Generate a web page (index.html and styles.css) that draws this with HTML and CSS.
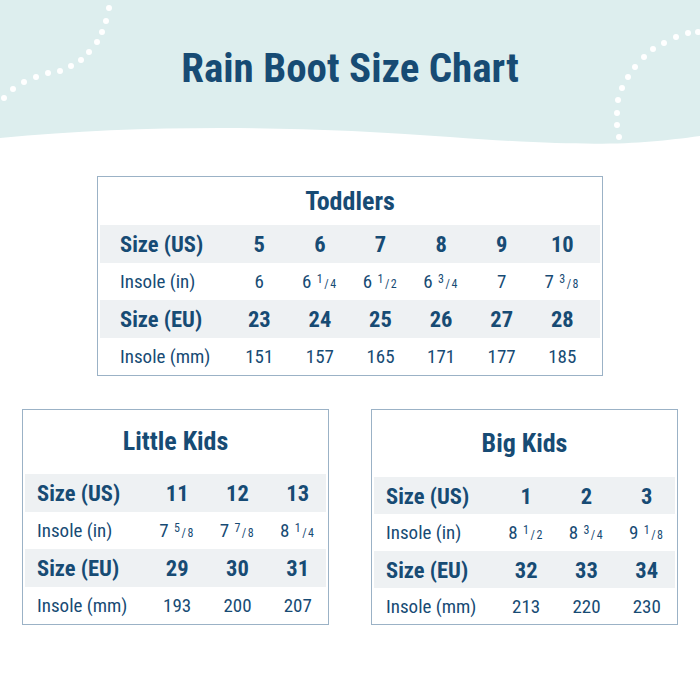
FILE: index.html
```html
<!DOCTYPE html>
<html>
<head>
<meta charset="utf-8">
<link rel="stylesheet" href="styles.css">
</head>
<body>
<header class="hero">
  <svg class="hero-bg" width="700" height="150" viewBox="0 0 700 150" aria-hidden="true">
    <path d="M0,138 C150,124 300,126 450,137 S640,144 700,136 L700,0 L0,0 Z" fill="#ddeeee"/>
    <g fill="#ffffff">
      <circle cx="109" cy="8" r="3"/><circle cx="106" cy="21" r="3"/><circle cx="102" cy="32" r="3"/>
      <circle cx="97" cy="42" r="3"/><circle cx="89" cy="52" r="3"/><circle cx="81" cy="60" r="3"/>
      <circle cx="71" cy="66" r="3"/><circle cx="60" cy="71" r="3"/><circle cx="48" cy="73" r="3"/>
      <circle cx="36" cy="77" r="3"/><circle cx="24" cy="82" r="3"/><circle cx="13" cy="89" r="3"/>
      <circle cx="4" cy="98" r="3"/>
      <circle cx="698" cy="32" r="3"/><circle cx="688" cy="33" r="3"/><circle cx="676" cy="37" r="3"/>
      <circle cx="664" cy="43" r="3"/><circle cx="653" cy="49" r="3"/><circle cx="644" cy="57" r="3"/>
      <circle cx="635" cy="67" r="3"/><circle cx="628" cy="77" r="3"/><circle cx="622" cy="88" r="3"/>
      <circle cx="618" cy="100" r="3"/><circle cx="617" cy="113" r="3"/><circle cx="617" cy="125" r="3"/>
      <circle cx="619" cy="137" r="3"/>
    </g>
  </svg>
  <h1 class="title">Rain Boot Size Chart</h1>
</header>

<main class="charts">
  <section class="card card-toddlers">
    <h2 class="card-title">Toddlers</h2>
    <div class="grid grid-6">
      <div class="row shade strong"><span class="lbl">Size (US)</span><span>5</span><span>6</span><span>7</span><span>8</span><span>9</span><span>10</span></div>
      <div class="row"><span class="lbl">Insole (in)</span><span>6</span><span>6 <span class="fr"><sup>1</sup>/<sub>4</sub></span></span><span>6 <span class="fr"><sup>1</sup>/<sub>2</sub></span></span><span>6 <span class="fr"><sup>3</sup>/<sub>4</sub></span></span><span>7</span><span>7 <span class="fr"><sup>3</sup>/<sub>8</sub></span></span></div>
      <div class="row shade strong"><span class="lbl">Size (EU)</span><span>23</span><span>24</span><span>25</span><span>26</span><span>27</span><span>28</span></div>
      <div class="row"><span class="lbl">Insole (mm)</span><span>151</span><span>157</span><span>165</span><span>171</span><span>177</span><span>185</span></div>
    </div>
  </section>

  <div class="pair">
    <section class="card card-small">
      <h2 class="card-title">Little Kids</h2>
      <div class="grid grid-3">
        <div class="row shade strong"><span class="lbl">Size (US)</span><span>11</span><span>12</span><span>13</span></div>
        <div class="row"><span class="lbl">Insole (in)</span><span>7 <span class="fr"><sup>5</sup>/<sub>8</sub></span></span><span>7 <span class="fr"><sup>7</sup>/<sub>8</sub></span></span><span>8 <span class="fr"><sup>1</sup>/<sub>4</sub></span></span></div>
        <div class="row shade strong"><span class="lbl">Size (EU)</span><span>29</span><span>30</span><span>31</span></div>
        <div class="row"><span class="lbl">Insole (mm)</span><span>193</span><span>200</span><span>207</span></div>
      </div>
    </section>
    <section class="card card-small card-big">
      <h2 class="card-title">Big Kids</h2>
      <div class="grid grid-3">
        <div class="row shade strong"><span class="lbl">Size (US)</span><span>1</span><span>2</span><span>3</span></div>
        <div class="row"><span class="lbl">Insole (in)</span><span>8 <span class="fr"><sup>1</sup>/<sub>2</sub></span></span><span>8 <span class="fr"><sup>3</sup>/<sub>4</sub></span></span><span>9 <span class="fr"><sup>1</sup>/<sub>8</sub></span></span></div>
        <div class="row shade strong"><span class="lbl">Size (EU)</span><span>32</span><span>33</span><span>34</span></div>
        <div class="row"><span class="lbl">Insole (mm)</span><span>213</span><span>220</span><span>230</span></div>
      </div>
    </section>
  </div>
</main>
</body>
</html>
```

FILE: styles.css
```css
* { box-sizing: border-box; }
html, body { margin: 0; padding: 0; }
body {
  width: 700px;
  height: 700px;
  background: #ffffff;
  font-family: "Roboto Condensed", "Roboto", "Liberation Sans Narrow", sans-serif;
  font-stretch: condensed;
  color: #174b74;
  overflow: hidden;
}

.hero {
  position: relative;
  height: 150px;
}
.hero-bg {
  position: absolute;
  left: 0;
  top: 0;
  display: block;
}
.title {
  position: relative;
  margin: 0;
  padding-top: 43px;
  text-align: center;
  font-size: 41px;
  line-height: 50px;
  font-weight: 700;
  color: #174b74;
}

.charts {
  padding-top: 26px;
  display: flex;
  flex-direction: column;
  align-items: center;
}

.card {
  border: 1.5px solid #9bb2c6;
  background: #fff;
  padding: 0 2px 0 2px;
}
.card-toddlers {
  width: 506px;
  height: 200px;
}
.card-title {
  margin: 0;
  text-align: center;
  font-weight: 700;
  font-size: 26px;
  line-height: 30px;
  color: #174b74;
}
.card-toddlers .card-title { padding-top: 9px; padding-bottom: 9px; }

.row {
  display: grid;
  align-items: center;
  height: 37.5px;
  font-size: 19px;
  font-weight: 400;
}
.row > span { text-align: center; }
.row > .lbl { text-align: left; }
.shade { background: #eef1f3; }
.strong { font-size: 22.5px; font-weight: 700; }

.grid-6 .row { grid-template-columns: 129px repeat(6, 60.6px); }
.grid-6 .lbl { padding-left: 20px; }

.pair {
  margin-top: 33px;
  display: flex;
  gap: 42px;
}
.card-small {
  width: 307px;
  height: 216px;
}
.card-small .card-title { padding-top: 16px; padding-bottom: 18px; }
.card-big .card-title { padding-top: 18px; padding-bottom: 19px; }
.card-big .row { height: 37px; }

.grid-3 .row { grid-template-columns: 122px repeat(3, 60.3px); }
.grid-3 .lbl { padding-left: 12px; }

.fr {
  font-size: 12px;
  letter-spacing: 1.5px;
  margin-left: 1px;
}
.fr sup, .fr sub {
  font-size: 12px;
  line-height: 0;
  position: relative;
  vertical-align: baseline;
}
.fr sup { top: -5px; }
.fr sub { top: 0; }
```
